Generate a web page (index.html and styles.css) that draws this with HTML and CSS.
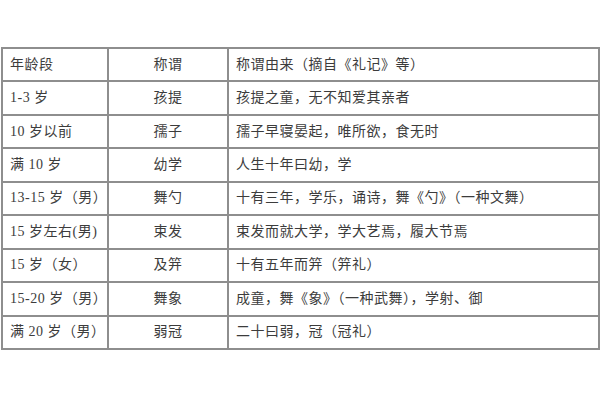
FILE: index.html
```html
<!DOCTYPE html>
<html lang="zh">
<head>
<meta charset="utf-8">
<title>年龄段称谓</title>
<link rel="stylesheet" href="styles.css">
</head>
<body>
<div class="page">
  <table class="ages">
    <colgroup>
      <col class="c-age">
      <col class="c-name">
      <col class="c-orig">
    </colgroup>
    <tr><td>年龄段</td><td class="mid">称谓</td><td>称谓由来（摘自《礼记》等）</td></tr>
    <tr><td>1-3 岁</td><td class="mid">孩提</td><td>孩提之童，无不知爱其亲者</td></tr>
    <tr><td>10 岁以前</td><td class="mid">孺子</td><td>孺子早寝晏起，唯所欲，食无时</td></tr>
    <tr><td>满 10 岁</td><td class="mid">幼学</td><td>人生十年曰幼，学</td></tr>
    <tr><td>13-15 岁（男）</td><td class="mid">舞勺</td><td>十有三年，学乐，诵诗，舞《勺》（一种文舞）</td></tr>
    <tr><td>15 岁左右(男)</td><td class="mid">束发</td><td>束发而就大学，学大艺焉，履大节焉</td></tr>
    <tr><td>15 岁（女）</td><td class="mid">及笄</td><td>十有五年而笄（笄礼）</td></tr>
    <tr><td>15-20 岁（男）</td><td class="mid">舞象</td><td>成童，舞《象》（一种武舞），学射、御</td></tr>
    <tr><td>满 20 岁（男）</td><td class="mid">弱冠</td><td>二十曰弱，冠（冠礼）</td></tr>
  </table>
</div>
</body>
</html>
```
FILE: styles.css
```css
html, body {
  margin: 0;
  padding: 0;
  background: #ffffff;
}
.page {
  width: 600px;
  height: 400px;
  padding: 47px 0 0 1px;
  box-sizing: border-box;
}
.ages {
  border-collapse: collapse;
  width: 597px;
  height: 303px;
  table-layout: fixed;
  font-family: "Liberation Serif", "Noto Sans CJK SC", serif;
  font-size: 14px;
  letter-spacing: 0.5px;
  color: #3c3c3c;
}
.c-age { width: 106px; }
.c-name { width: 120px; }
.c-orig { width: 371px; }
.ages td {
  border: 2px solid #8e8e8e;
  padding: 0 0 0 7px;
  vertical-align: middle;
  white-space: nowrap;
  line-height: 1;
}
.ages td.mid {
  text-align: center;
  padding: 0;
}
```
